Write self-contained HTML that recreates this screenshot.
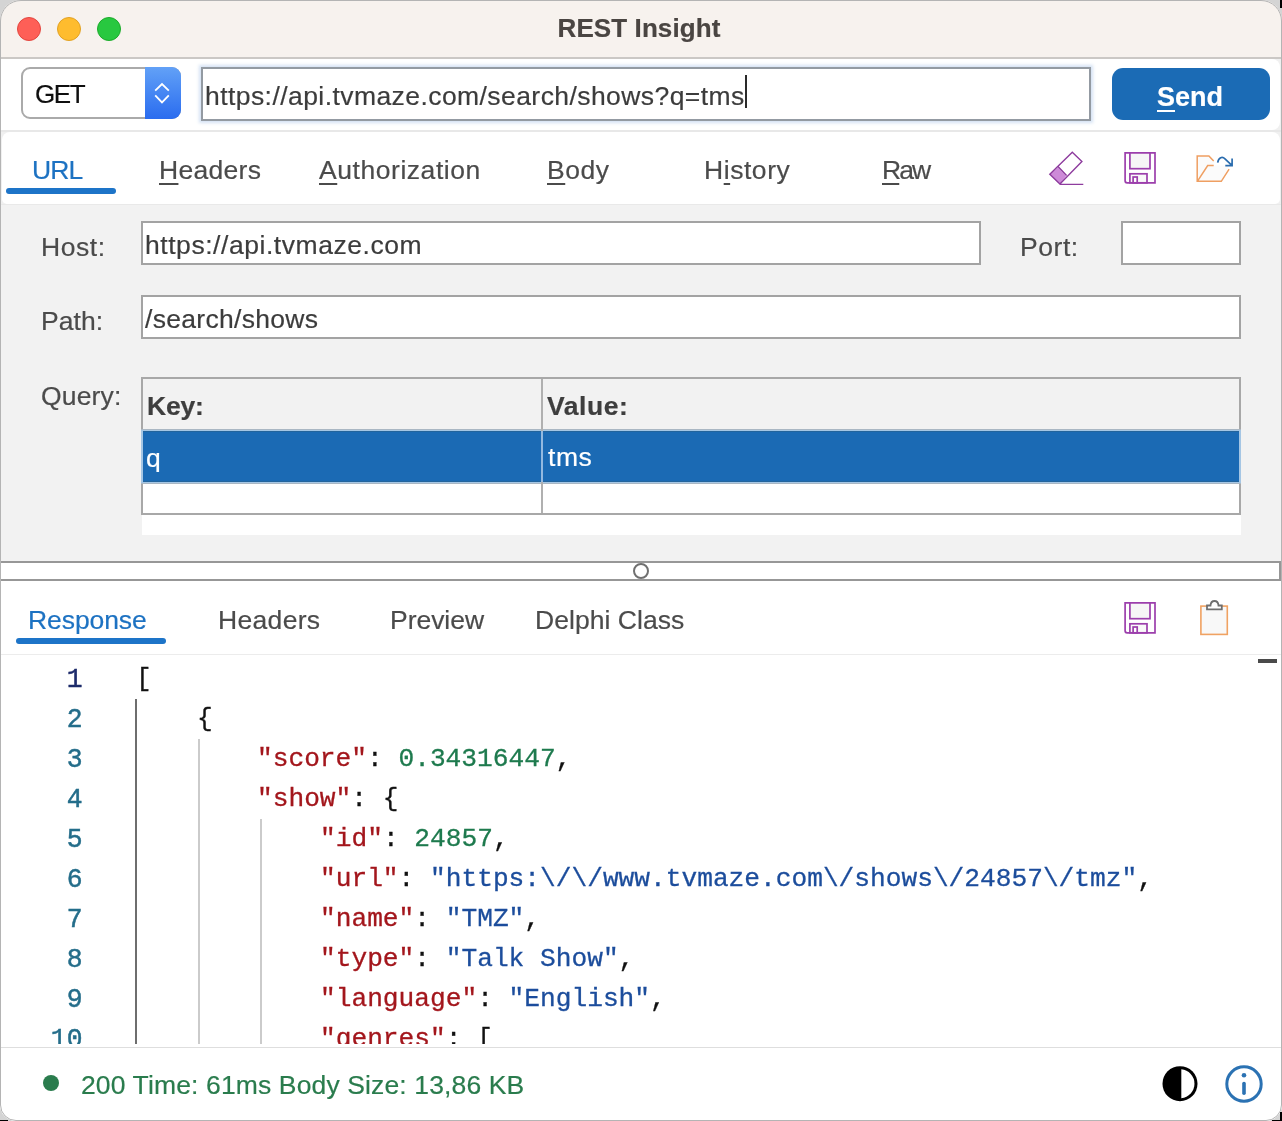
<!DOCTYPE html>
<html><head><meta charset="utf-8">
<style>
*{box-sizing:border-box;margin:0;padding:0}
html,body{-webkit-font-smoothing:antialiased;width:1282px;height:1121px;overflow:hidden;background:#d4d4d4;font-family:"Liberation Sans",sans-serif}
.a{position:absolute}
#win{position:absolute;left:0;top:0;width:1282px;height:1121px;border-radius:21px 21px 16px 16px;overflow:hidden;background:#f0f0f0}
#frame{position:absolute;left:0;top:0;width:1282px;height:1121px;border-radius:21px 21px 16px 16px;border:1.5px solid #b4b4b4;pointer-events:none}
.t{position:absolute;will-change:transform;-webkit-text-stroke:0.2px currentColor;font-size:26.5px;line-height:26.5px;letter-spacing:0.55px;color:#4b4b4b;white-space:nowrap}
.u{text-decoration:underline;text-decoration-thickness:2px;text-underline-offset:4px}
.inp{position:absolute;background:#fff;border:2px solid #a3a3a3}
.ln{position:absolute;will-change:transform;left:0;width:82.5px;text-align:right;font-family:"Liberation Mono",monospace;font-size:26.4px;line-height:40px;color:#246d8a;-webkit-text-stroke:0.45px currentColor;transform:scaleY(1.06);transform-origin:50% 27px}
.cl{position:absolute;will-change:transform;font-family:"Liberation Mono",monospace;font-size:26.2px;line-height:40px;color:#111;-webkit-text-stroke:0.3px currentColor;white-space:pre}
.k{color:#a3161c}.s{color:#1c4d9c}.n{color:#1e7a4e}
</style></head><body>
<div id="win">
 <!-- title bar -->
 <div class="a" style="left:0;top:0;width:1282px;height:59px;background:#f7f2ee;border-bottom:2px solid #cbc8c5"></div>
 <div class="a" style="left:17px;top:17px;width:24px;height:24px;border-radius:50%;background:#fe5f57;border:1px solid #e2463f"></div>
 <div class="a" style="left:57px;top:17px;width:24px;height:24px;border-radius:50%;background:#febc2e;border:1px solid #e1a124"></div>
 <div class="a" style="left:97px;top:17px;width:24px;height:24px;border-radius:50%;background:#28c840;border:1px solid #1cab2a"></div>
 <div class="t" style="left:-2.5px;width:1282px;top:15px;text-align:center;font-weight:bold;font-size:26px;line-height:26px;letter-spacing:0.1px;color:#4a4542">REST Insight</div>

 <!-- toolbar -->
 <div class="a" style="left:0;top:130px;width:1282px;height:2px;background:#e8e8e8"></div>
 <div class="a" style="left:0;top:59px;width:1280px;height:71px;background:#fff;border-radius:0 8px 8px 0"></div>
 <div class="a" style="left:21px;top:67px;width:160px;height:52px;border:2px solid #aaaaaa;border-radius:9px;background:#fff"></div>
 <div class="a" style="left:145px;top:67px;width:36px;height:52px;border-radius:0 9px 9px 0;background:linear-gradient(#62a1f7,#2a6cef)"></div>
 <svg class="a" style="left:145px;top:67px" width="36" height="52"><path d="M10.2 23.7 L17 17 L23.8 23.7 M10.2 28.4 L17 35.4 L23.8 28.4" fill="none" stroke="#fff" stroke-width="1.8"/></svg>
 <div class="t" style="left:34.5px;top:81px;font-size:26px;line-height:26px;letter-spacing:-1.4px;color:#0f0f0f">GET</div>
 <div class="inp" style="left:201px;top:67px;width:890px;height:54px;border-color:#939aa2;box-shadow:0 0 3px 2px rgba(160,190,230,0.45)"></div>
 <div class="t" style="left:205px;top:83px;color:#3c3c3c;letter-spacing:0.43px">https://api.tvmaze.com/search/shows?q=tms</div>
 <div class="a" style="left:745px;top:75px;width:1.6px;height:33px;background:#2a2a2a"></div>
 <div class="a" style="left:1112px;top:68px;width:158px;height:52px;background:#1b6bb5;border-radius:11px"></div>
 <div class="t" style="left:1157px;top:83.5px;font-weight:bold;font-size:27px;line-height:27px;letter-spacing:0;color:#fff"><span class="u">S</span>end</div>

 <!-- tab bar -->
 <div class="a" style="left:2px;top:132px;width:1278px;height:72px;background:#fff;border-radius:8px 8px 5px 5px"></div>
 <div class="t" style="left:32px;top:156.5px;color:#1d72c2;letter-spacing:-0.9px">URL</div>
 <div class="a" style="left:6px;top:188px;width:110px;height:6px;border-radius:3px;background:#1d74c8"></div>
 <div class="t" style="left:158.5px;top:156.5px;letter-spacing:0.3px"><span class="u">H</span>eaders</div>
 <div class="t" style="left:319px;top:156.5px"><span class="u">A</span>uthorization</div>
 <div class="t" style="left:547px;top:156.5px"><span class="u">B</span>ody</div>
 <div class="t" style="left:704px;top:156.5px">H<span class="u">i</span>story</div>
 <div class="t" style="left:882px;top:156.5px;letter-spacing:-1.9px"><span class="u">R</span>aw</div>
 <!-- eraser -->
 <svg class="a" style="left:1040px;top:145px" width="50" height="45" viewBox="1040 145 50 45">
  <path d="M1049.8 174.2 L1058 167.5 L1066.2 175.9 L1059.9 184.1 Z" fill="#cd8ad8"/>
  <path d="M1072.3 152.3 L1081.9 161.4 L1059.9 184.1 L1049.8 174.2 Z M1058 166.6 L1066.6 175.4 M1059.9 184.4 L1083.3 184.4" fill="none" stroke="#8e3c9e" stroke-width="1.4" stroke-linejoin="miter"/>
 </svg>
 <!-- save -->
 <svg class="a" style="left:1115px;top:145px" width="50" height="45" viewBox="1115 145 50 45">
  <path d="M1125.1 152.9 H1155 V182.8 H1127.1 Q1125.1 182.8 1125.1 180.8 Z" fill="#fff" stroke="#9c3fac" stroke-width="1.7"/>
  <rect x="1129.9" y="152.9" width="20.1" height="15.8" fill="#f6f6f6" stroke="#9c3fac" stroke-width="1.7"/>
  <rect x="1129.9" y="173.8" width="17.1" height="9" fill="#f9f9f9" stroke="#9c3fac" stroke-width="1.7"/>
  <rect x="1133.1" y="177" width="4.1" height="5.8" fill="#fff" stroke="#9c3fac" stroke-width="1.7"/>
 </svg>
 <!-- folder export -->
 <svg class="a" style="left:1190px;top:145px" width="50" height="45" viewBox="1190 145 50 45">
  <path d="M1197.2 156 H1208.9 L1213.7 161.1 V165.5 H1229.1 L1221.3 181.3 H1197.2 Z" fill="#fbfbfb"/><path d="M1213.7 161.1 L1208.9 156 H1197.2 V181.3 H1221.3 L1229.1 169.1 M1198 180.3 L1207.7 165.5 H1213.7" fill="none" stroke="#ef9f62" stroke-width="1.5"/>
  <path d="M1217.7 162.7 C1218.5 157 1222.5 156.5 1225 158.8 L1231.6 165.2 M1232.1 158.6 V165.7 H1225.3" fill="none" stroke="#2a6cae" stroke-width="1.7"/>
 </svg>

 <!-- gray url panel -->
 <div class="a" style="left:0;top:204px;width:1282px;height:357px;background:#f2f2f2;border-top:1px solid #e9e9e9"></div>
 <div class="t" style="left:41px;top:234px">Host:</div>
 <div class="inp" style="left:141px;top:221px;width:840px;height:44px"></div>
 <div class="t" style="left:145px;top:232px;color:#3c3c3c">https://api.tvmaze.com</div>
 <div class="t" style="left:1020px;top:234px">Port:</div>
 <div class="inp" style="left:1121px;top:221px;width:120px;height:44px"></div>
 <div class="t" style="left:41px;top:308px;letter-spacing:0.05px">Path:</div>
 <div class="inp" style="left:141px;top:295px;width:1100px;height:44px"></div>
 <div class="t" style="left:145px;top:306px;color:#3c3c3c;letter-spacing:0.3px">/search/shows</div>
 <div class="t" style="left:41px;top:383px;letter-spacing:0.15px">Query:</div>

 <div class="a" style="left:142px;top:514px;width:1099px;height:21px;background:#fff"></div>
 <div class="a" style="left:141px;top:377px;width:1100px;height:138px;border:2px solid #a8a8a8;background:#fff"></div>
 <div class="a" style="left:143px;top:379px;width:1096px;height:51px;background:#f2f2f2"></div>
 <div class="a" style="left:141px;top:429px;width:1100px;height:55px;background:#aab7c3"></div>
 <div class="a" style="left:141px;top:430px;width:1100px;height:53px;background:#a5c6e4"></div>
 <div class="a" style="left:143px;top:431px;width:1096px;height:51px;background:#1b6ab4;border-top:1px solid #23649c;border-bottom:1px solid #23649c"></div>
 <div class="a" style="left:541px;top:379px;width:2px;height:134px;background:#b0b0b0"></div>
 <div class="a" style="left:541px;top:431px;width:2px;height:51px;background:#93b9e0"></div>
 <div class="t" style="left:147px;top:393px;font-weight:bold;color:#3e3e3e;letter-spacing:-0.2px">Key:</div>
 <div class="t" style="left:547px;top:393px;font-weight:bold;color:#3e3e3e">Value:</div>
 <div class="t" style="left:146px;top:445px;color:#fff">q</div>
 <div class="t" style="left:548px;top:444px;color:#fff">tms</div>

 <!-- splitter -->
 <div class="a" style="left:0;top:561px;width:1282px;height:560px;background:#fff"></div>
 <div class="a" style="left:1px;top:561px;width:1279.5px;height:20px;border:2px solid #979797;border-left:none;background:#fff"></div>
 <div class="a" style="left:633px;top:563px;width:16px;height:16px;border:2px solid #707070;border-radius:50%;background:#fff"></div>

 <!-- response tabs -->
 <div class="t" style="left:28px;top:607px;color:#1d72c2;letter-spacing:-0.08px">Response</div>
 <div class="a" style="left:16px;top:638px;width:150px;height:6px;border-radius:3px;background:#1d74c8"></div>
 <div class="t" style="left:218px;top:607px;letter-spacing:0.32px">Headers</div>
 <div class="t" style="left:390px;top:607px;letter-spacing:-0.03px">Preview</div>
 <div class="t" style="left:535px;top:607px;letter-spacing:0.05px">Delphi Class</div>
 <svg class="a" style="left:1115px;top:595px" width="50" height="45" viewBox="1115 145 50 45">
  <path d="M1125.1 152.9 H1155 V182.8 H1127.1 Q1125.1 182.8 1125.1 180.8 Z" fill="#fff" stroke="#9c3fac" stroke-width="1.7"/>
  <rect x="1129.9" y="152.9" width="20.1" height="15.8" fill="#f6f6f6" stroke="#9c3fac" stroke-width="1.7"/>
  <rect x="1129.9" y="173.8" width="17.1" height="9" fill="#f9f9f9" stroke="#9c3fac" stroke-width="1.7"/>
  <rect x="1133.1" y="177" width="4.1" height="5.8" fill="#fff" stroke="#9c3fac" stroke-width="1.7"/>
 </svg>
 <svg class="a" style="left:1195px;top:595px" width="40" height="45" viewBox="0 0 40 45">
  <rect x="5.9" y="11.1" width="26.4" height="28.3" fill="#f8f8f8" stroke="#f0a262" stroke-width="1.6"/>
  <path d="M12 14.3 V10.5 H15.5 C16 4.5 23 4.5 23.5 10.5 H26.8 V14.3 Z" fill="#fff" stroke="#6f6f6f" stroke-width="1.8"/>
 </svg>
 <div class="a" style="left:0;top:654px;width:1282px;height:1px;background:#ececec"></div>

 <!-- code -->
 <div class="a" style="left:0;top:655px;width:1282px;height:389px;overflow:hidden" id="code">
  <div class="ln" style="top:5px;color:#1d2b6b;">1</div>
  <div class="cl" style="left:136px;top:4px">[</div>
  <div class="ln" style="top:45px;">2</div>
  <div class="cl" style="left:196.5px;top:44px">{</div>
  <div class="ln" style="top:85px;">3</div>
  <div class="cl" style="left:257.3px;top:84px"><span class="k">"score"</span>: <span class="n">0.34316447</span>,</div>
  <div class="ln" style="top:125px;">4</div>
  <div class="cl" style="left:257.3px;top:124px"><span class="k">"show"</span>: {</div>
  <div class="ln" style="top:165px;">5</div>
  <div class="cl" style="left:320.3px;top:164px"><span class="k">"id"</span>: <span class="n">24857</span>,</div>
  <div class="ln" style="top:205px;">6</div>
  <div class="cl" style="left:320.3px;top:204px"><span class="k">"url"</span>: <span class="s">"https:\/\/www.tvmaze.com\/shows\/24857\/tmz"</span>,</div>
  <div class="ln" style="top:245px;">7</div>
  <div class="cl" style="left:320.3px;top:244px"><span class="k">"name"</span>: <span class="s">"TMZ"</span>,</div>
  <div class="ln" style="top:285px;">8</div>
  <div class="cl" style="left:320.3px;top:284px"><span class="k">"type"</span>: <span class="s">"Talk Show"</span>,</div>
  <div class="ln" style="top:325px;">9</div>
  <div class="cl" style="left:320.3px;top:324px"><span class="k">"language"</span>: <span class="s">"English"</span>,</div>
  <div class="ln" style="top:365px;">10</div>
  <div class="cl" style="left:320.3px;top:364px"><span class="k">"genres"</span>: [</div>
  <div class="a" style="left:135.2px;top:44px;width:1.6px;height:360px;background:#6e6e6e"></div>
  <div class="a" style="left:198.3px;top:84px;width:1.6px;height:320px;background:#cbcbcb"></div>
  <div class="a" style="left:260.3px;top:164px;width:1.6px;height:240px;background:#cbcbcb"></div>
 </div>
 <div class="a" style="left:1258px;top:659px;width:19px;height:4px;background:#4a4a4a"></div>
 <div class="a" style="left:0;top:1047px;width:1282px;height:1px;background:#dedede"></div>

 <!-- status -->
 <div class="a" style="left:43px;top:1075px;width:16px;height:16px;border-radius:50%;background:#2a7c4d"></div>
 <div class="t" style="left:81px;top:1072px;color:#2a7c4d;letter-spacing:0.13px">200 Time: 61ms Body Size: 13,86 KB</div>
 <svg class="a" style="left:1160px;top:1064px" width="40" height="40" viewBox="0 0 40 40"><circle cx="20" cy="19.7" r="17.5" fill="#000"/><path d="M21.3 5.26 A14.5 14.5 0 0 1 21.3 34.14 Z" fill="#fff"/></svg>
 <svg class="a" style="left:1224px;top:1064px" width="40" height="40" viewBox="0 0 40 40">
  <circle cx="20" cy="20" r="17.2" fill="#fff" stroke="#2b72b3" stroke-width="3"/>
  <circle cx="20" cy="11.2" r="2.3" fill="#2b72b3"/>
  <path d="M20 19.5 V29.3" stroke="#2b72b3" stroke-width="3.6" stroke-linecap="round"/>
 </svg>
</div>
<div id="frame"></div>
<div class="a" style="left:1280px;top:0;width:2px;height:8px;background:#000"></div>
<div class="a" style="left:1280px;top:1112px;width:2px;height:9px;background:#000"></div>
<div class="a" style="left:1272px;top:1120px;width:10px;height:1px;background:#000"></div>
<div class="a" style="left:0;top:1120px;width:8px;height:1px;background:#000"></div>
</body></html>
